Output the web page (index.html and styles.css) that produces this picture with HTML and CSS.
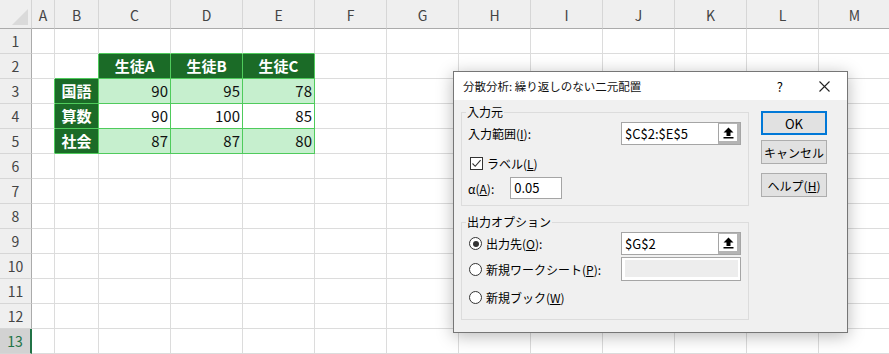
FILE: index.html
```html
<!DOCTYPE html>
<html lang="ja">
<head>
    <meta charset="UTF-8">
    <meta name="viewport" content="width=device-width, initial-scale=1.0">
    <title>分散分析: 繰り返しのない二元配置</title>
    <link rel="stylesheet" href="styles.css">
</head>
<body>
    <div class="sheet" id="sheet"></div>

    <div class="dialog">
        <div class="dlg-title">
            <span class="dlg-caption">分散分析: 繰り返しのない二元配置</span>
            <span class="dlg-help">?</span>
            <svg class="dlg-close" width="11" height="11" viewBox="0 0 11 11">
                <path d="M0.5 0.5 L10.5 10.5 M10.5 0.5 L0.5 10.5" stroke="#222" stroke-width="1.1" fill="none"/>
            </svg>
        </div>
        <div class="dlg-body">
            <div class="dlg-main">
                <fieldset class="group group-in">
                    <legend>入力元</legend>
                    <div class="row row-range">
                        <span>入力範囲(<u>I</u>):</span>
                        <div class="refedit">
                            <span class="ref-text">$C$2:$E$5</span>
                            <span class="ref-btn">
                                <svg width="11" height="12" viewBox="0 0 11 12">
                                    <path d="M5.5 0.5 L10.5 5.5 H7.5 V9 H3.5 V5.5 H0.5 Z" fill="#000"/>
                                    <rect x="0.5" y="10" width="10" height="1.5" fill="#000"/>
                                </svg>
                            </span>
                        </div>
                    </div>
                    <div class="row row-check">
                        <span class="check">
                            <svg width="11" height="11" viewBox="0 0 11 11">
                                <path d="M1.5 5.5 L4.2 8.3 L9.6 2.2" stroke="#333" stroke-width="1.1" fill="none"/>
                            </svg>
                        </span>
                        <span>ラベル(<u>L</u>)</span>
                    </div>
                    <div class="row row-alpha">
                        <span>α(<u>A</u>):</span>
                        <span class="textbox alpha">0.05</span>
                    </div>
                </fieldset>

                <fieldset class="group group-out">
                    <legend>出力オプション</legend>
                    <div class="row row-dest">
                        <span class="radio on"></span>
                        <span>出力先(<u>O</u>):</span>
                        <div class="refedit">
                            <span class="ref-text">$G$2</span>
                            <span class="ref-btn">
                                <svg width="11" height="12" viewBox="0 0 11 12">
                                    <path d="M5.5 0.5 L10.5 5.5 H7.5 V9 H3.5 V5.5 H0.5 Z" fill="#000"/>
                                    <rect x="0.5" y="10" width="10" height="1.5" fill="#000"/>
                                </svg>
                            </span>
                        </div>
                    </div>
                    <div class="row row-sheet">
                        <span class="radio"></span>
                        <span>新規ワークシート(<u>P</u>):</span>
                        <div class="disabled-box"><span></span></div>
                    </div>
                    <div class="row row-book">
                        <span class="radio"></span>
                        <span>新規ブック(<u>W</u>)</span>
                    </div>
                </fieldset>
            </div>
            <div class="dlg-buttons">
                <button class="btn btn-ok">OK</button>
                <button class="btn btn-cancel">キャンセル</button>
                <button class="btn btn-help">ヘルプ(<u>H</u>)</button>
            </div>
        </div>
    </div>

    <script>
        const cols = ['', 'A', 'B', 'C', 'D', 'E', 'F', 'G', 'H', 'I', 'J', 'K', 'L', 'M'];
        const rows = 13;
        const tabel = {
            2: { C: '生徒A', D: '生徒B', E: '生徒C' },
            3: { B: '国語', C: 90, D: 95, E: 78 },
            4: { B: '算数', C: 90, D: 100, E: 85 },
            5: { B: '社会', C: 87, D: 87, E: 80 }
        };
        const sheet = document.getElementById('sheet');

        for (let r = 0; r <= rows; r++) {
            cols.forEach((c, i) => {
                let cell = document.createElement('div');
                cell.className = 'cell';
                if (r === 0 && i === 0) {
                    cell.classList.add('corner');
                    cell.innerHTML = '<span class="tri"></span>';
                } else if (r === 0) {
                    cell.classList.add('ch');
                    cell.textContent = c;
                } else if (i === 0) {
                    cell.classList.add('rh');
                    if (r === rows) cell.classList.add('sel');
                    cell.textContent = r;
                } else {
                    let isi = tabel[r] ? tabel[r][c] : undefined;
                    let dalamTabel = ['C', 'D', 'E'].includes(c) && r >= 2 && r <= 5;
                    if (c === 'B' && r >= 3 && r <= 5) cell.classList.add('tb', 'tb-side');
                    if (dalamTabel && r === 2) cell.classList.add('tb', 'tb-head');
                    if (dalamTabel && (r === 3 || r === 5)) cell.classList.add('tb', 'tb-band');
                    if (dalamTabel && r === 4) cell.classList.add('tb');
                    if (c === 'A' && r >= 3 && r <= 5) cell.classList.add('gr');
                    if (c === 'B' && r === 2) cell.classList.add('gr', 'gb');
                    if (['C', 'D', 'E'].includes(c) && r === 1) cell.classList.add('gb');
                    if (typeof isi === 'number') cell.classList.add('num');
                    if (isi !== undefined) cell.textContent = isi;
                }
                sheet.appendChild(cell);
            });
        }
    </script>
</body>
</html>
```

FILE: styles.css
```css
html, body { margin: 0; padding: 0; }
body { width: 889px; height: 354px; overflow: hidden; background: #fff; font-family: "Noto Sans CJK JP", "Noto Sans", sans-serif; position: relative; }

/* lembar kerja */
.sheet { display: grid; grid-template-columns: 32px 23px 44px repeat(11, 72px); grid-template-rows: 29px repeat(13, 25px); }
.cell { box-sizing: border-box; border-right: 1px solid #dcdcdc; border-bottom: 1px solid #dcdcdc; display: flex; align-items: center; padding: 0 3px; font-size: 15px; line-height: 20px; color: #111; white-space: nowrap; overflow: hidden; }
.corner { background: #efefef; border-right-color: #d4d4d4; border-bottom-color: #ababab; position: relative; }
.corner .tri { position: absolute; right: 3px; bottom: 3px; width: 16px; height: 16px; background: #dadada; clip-path: polygon(100% 0, 100% 100%, 0 100%); }
.ch { background: #efefef; justify-content: center; border-right-color: #d6d6d6; border-bottom-color: #ababab; color: #444; font-size: 14px; padding-top: 1px; }
.rh { background: #efefef; justify-content: center; border-right-color: #ababab; border-bottom-color: #d6d6d6; color: #444; font-size: 14px; }
.rh.sel { background: #d2d2d2; color: #217346; border-right: 2px solid #217346; }

.tb { border-right-color: #4fcb5c; border-bottom-color: #4fcb5c; }
.gr { border-right-color: #4fcb5c; }
.gb { border-bottom-color: #4fcb5c; }
.tb-head, .tb-side { background: #1b6b27; color: #fff; font-weight: bold; justify-content: center; }
.tb-band { background: #c6efce; }
.num { justify-content: flex-end; padding-right: 2px; }

/* dialog */
.dialog { position: absolute; left: 453px; top: 71px; width: 395px; height: 262px; box-sizing: border-box; border: 1px solid #767676; background: #f0f0f0; box-shadow: 0 3px 16px rgba(0,0,0,0.28); font-size: 12px; color: #000; }
.dlg-title { height: 28px; background: #fff; display: flex; align-items: center; padding-left: 9px; }
.dlg-caption { flex: 1; font-size: 11.5px; color: #111; }
.dlg-help { font-size: 13px; margin-right: 36px; }
.dlg-close { margin-right: 17px; }

.dlg-body { display: flex; padding: 4px 0 0 7px; }
.dlg-main { width: 288px; }
.dlg-buttons { display: flex; flex-direction: column; margin-left: 12px; padding-top: 7px; }

.btn { width: 66px; height: 24px; box-sizing: border-box; background: #e1e1e1; border: 1px solid #adadad; font-family: inherit; font-size: 12px; padding: 0; color: #000; }
.btn-ok { border: 2px solid #0078d7; font-size: 13px; }
.btn-cancel { margin-top: 5px; }
.btn-help { margin-top: 9px; }

.group { margin: 0; padding: 0 7px 6px 6px; border: 1px solid #dcdcdc; min-width: 0; }
.group legend { margin-left: -2px; padding: 0 1px; line-height: 16px; font-size: 12px; }
.group-out { margin-top: 8px; padding-bottom: 15px; }

.row { display: flex; align-items: center; }
.row-range { height: 23px; margin-top: 2px; }
.row-check { height: 13px; margin-top: 12px; }
.row-alpha { height: 22px; margin-top: 7px; }
.row-dest { height: 23px; margin-top: 2px; }
.row-sheet { height: 24px; margin-top: 2px; }
.row-book { height: 13px; margin-top: 10px; }

.refedit { margin-left: auto; width: 120px; height: 23px; box-sizing: border-box; border: 1px solid #a5a5a5; background: #fff; display: flex; }
.ref-text { flex: 1; padding-left: 3px; font-size: 13px; line-height: 21px; }
.ref-btn { width: 22px; box-sizing: border-box; border-left: 1px solid #a5a5a5; border-right: 3px solid #b4b4b4; border-bottom: 3px solid #b4b4b4; border-top: 1px solid #b4b4b4; display: flex; align-items: center; justify-content: center; }

.check { width: 13px; height: 13px; box-sizing: border-box; border: 1px solid #333; background: #fff; margin: 0 4px 0 2px; display: flex; align-items: center; justify-content: center; }
.radio { width: 13px; height: 13px; box-sizing: border-box; border: 1px solid #333; border-radius: 50%; background: #fff; margin: 0 4px 0 1px; position: relative; }
.radio.on::after { content: ""; position: absolute; left: 2.5px; top: 2.5px; width: 6px; height: 6px; border-radius: 50%; background: #333; }

.textbox { box-sizing: border-box; border: 1px solid #a5a5a5; background: #fff; font-size: 13px; line-height: 20px; padding-left: 3px; }
.alpha { width: 52px; height: 22px; margin-left: 16px; }

.disabled-box { margin-left: auto; width: 120px; height: 24px; box-sizing: border-box; border: 1px solid #a5a5a5; background: #fff; padding: 2px 2px 3px 3px; display: flex; }
.disabled-box span { flex: 1; background: #ededed; }
```
